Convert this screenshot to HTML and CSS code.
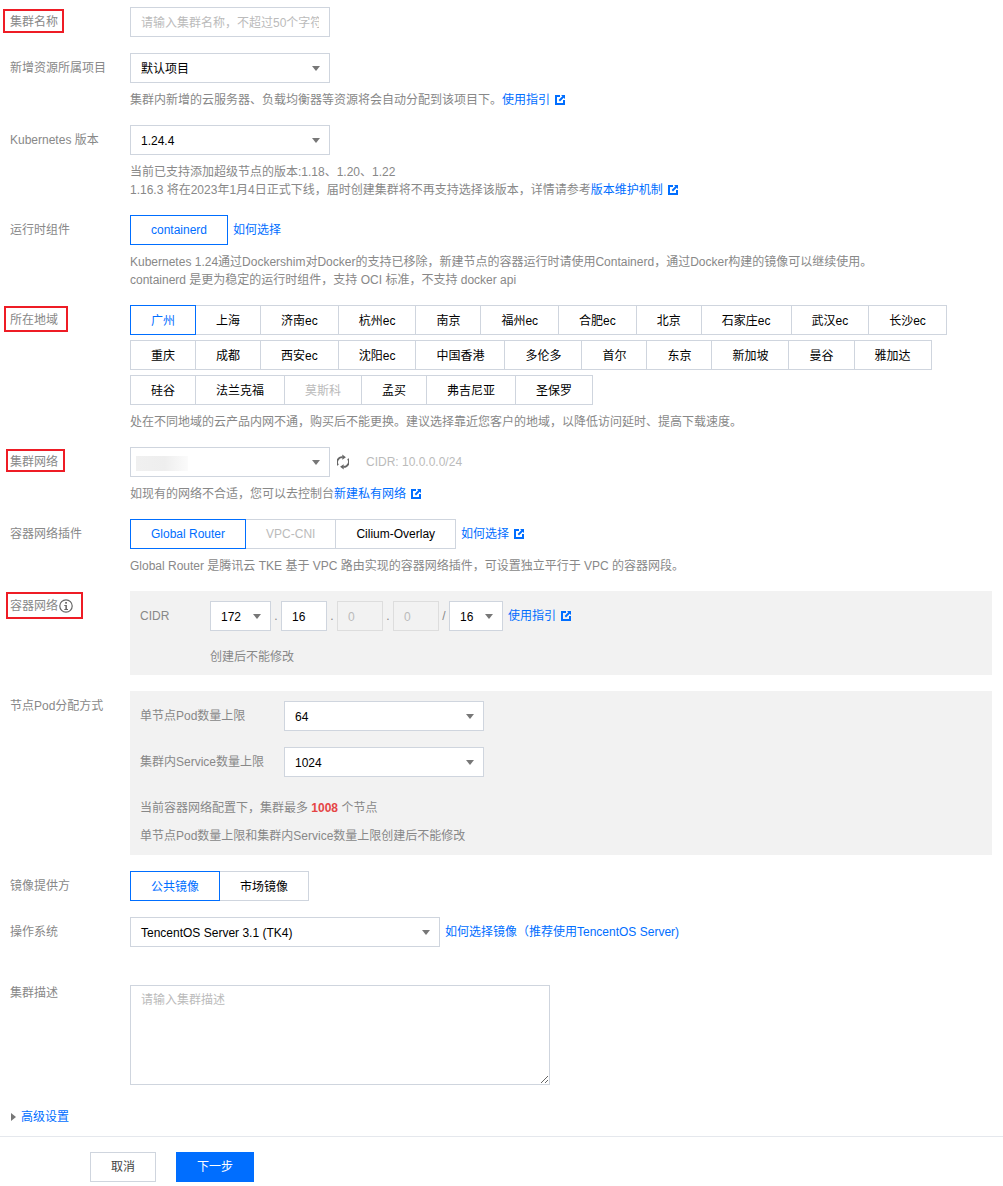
FILE: index.html
```html
<!DOCTYPE html>
<html lang="zh-CN">
<head>
<meta charset="utf-8">
<title>集群信息</title>
<link rel="stylesheet" href="styles.css">
</head>
<body>
<svg class="sprite" width="0" height="0">
  <symbol id="ext" viewBox="0 0 10 10">
    <path d="M0 0H5V2H2V8H8V5H10V10H0Z" fill="#006eff"/>
    <path d="M6 0H10V4L8.7 2.7 5 6.4 3.6 5 7.3 1.3Z" fill="#006eff"/>
  </symbol>
</svg>
<main class="page">
  <form class="form">
    <div class="row">
      <div class="label"><span class="mark mark-name">集群名称</span></div>
      <div class="field"><div class="input w200 placeholder"><span class="clip">请输入集群名称，不超过50个字符</span></div></div>
    </div>

    <div class="row">
      <div class="label">新增资源所属项目</div>
      <div class="field">
        <div class="select w200">默认项目<i class="caret"></i></div>
        <p class="help">集群内新增的云服务器、负载均衡器等资源将会自动分配到该项目下。<a class="link">使用指引</a><svg class="ext"><use href="#ext"/></svg></p>
      </div>
    </div>

    <div class="row">
      <div class="label">Kubernetes 版本</div>
      <div class="field">
        <div class="select w200">1.24.4<i class="caret"></i></div>
        <p class="help">当前已支持添加超级节点的版本:1.18、1.20、1.22<br>1.16.3 将在2023年1月4日正式下线，届时创建集群将不再支持选择该版本，详情请参考<a class="link">版本维护机制</a><svg class="ext"><use href="#ext"/></svg></p>
      </div>
    </div>

    <div class="row">
      <div class="label">运行时组件</div>
      <div class="field">
        <div class="inline">
          <div class="group latin"><span class="btn on">containerd</span></div>
          <a class="link side">如何选择</a>
        </div>
        <p class="help">Kubernetes 1.24通过Dockershim对Docker的支持已移除，新建节点的容器运行时请使用Containerd，通过Docker构建的镜像可以继续使用。<br>containerd 是更为稳定的运行时组件，支持 OCI 标准，不支持 docker api</p>
      </div>
    </div>

    <div class="row">
      <div class="label"><span class="mark mark-region">所在地域</span></div>
      <div class="field">
        <div class="regions">
          <div class="group">
            <span class="btn on">广州</span><span class="btn">上海</span><span class="btn">济南ec</span><span class="btn">杭州ec</span><span class="btn">南京</span><span class="btn">福州ec</span><span class="btn">合肥ec</span><span class="btn">北京</span><span class="btn">石家庄ec</span><span class="btn">武汉ec</span><span class="btn">长沙ec</span>
          </div>
          <div class="group">
            <span class="btn">重庆</span><span class="btn">成都</span><span class="btn">西安ec</span><span class="btn">沈阳ec</span><span class="btn">中国香港</span><span class="btn">多伦多</span><span class="btn">首尔</span><span class="btn">东京</span><span class="btn">新加坡</span><span class="btn">曼谷</span><span class="btn">雅加达</span>
          </div>
          <div class="group">
            <span class="btn">硅谷</span><span class="btn">法兰克福</span><span class="btn off">莫斯科</span><span class="btn">孟买</span><span class="btn">弗吉尼亚</span><span class="btn">圣保罗</span>
          </div>
        </div>
        <p class="help">处在不同地域的云产品内网不通，购买后不能更换。建议选择靠近您客户的地域，以降低访问延时、提高下载速度。</p>
      </div>
    </div>

    <div class="row">
      <div class="label"><span class="mark mark-net">集群网络</span></div>
      <div class="field">
        <div class="inline">
          <div class="select w200"><span class="blur"></span><i class="caret"></i></div>
          <svg class="refresh" viewBox="1 0 12 16" width="12" height="16">
            <path d="M2 11.2A5.2 5.2 0 0 1 6.6 3.1" fill="none" stroke="#666" stroke-width="1.8"/>
            <path d="M6.3 0.6V5.8L9.9 3.2Z" fill="#666"/>
            <path d="M12 4.8A5.2 5.2 0 0 1 7.4 12.9" fill="none" stroke="#666" stroke-width="1.8"/>
            <path d="M7.7 15.4V10.2L4.1 12.8Z" fill="#666"/>
          </svg>
          <span class="cidr-note">CIDR: 10.0.0.0/24</span>
        </div>
        <p class="help">如现有的网络不合适，您可以去控制台<a class="link">新建私有网络</a><svg class="ext"><use href="#ext"/></svg></p>
      </div>
    </div>

    <div class="row">
      <div class="label">容器网络插件</div>
      <div class="field">
        <div class="inline">
          <div class="group latin"><span class="btn on">Global Router</span><span class="btn off">VPC-CNI</span><span class="btn">Cilium-Overlay</span></div>
          <a class="link side">如何选择</a><svg class="ext"><use href="#ext"/></svg>
        </div>
        <p class="help">Global Router 是腾讯云 TKE 基于 VPC 路由实现的容器网络插件，可设置独立平行于 VPC 的容器网段。</p>
      </div>
    </div>

    <div class="row">
      <div class="label"><span class="mark mark-cni">容器网络<svg class="info" viewBox="0 0 14 14" width="14" height="14"><circle cx="7" cy="7" r="6.2" fill="none" stroke="#666" stroke-width="1.2"/><rect x="6.2" y="3" width="1.7" height="1.7" fill="#666"/><path d="M5.3 6H7.9V10H9V11H5.3V10H6.4V7H5.3Z" fill="#666"/></svg></span></div>
      <div class="field">
        <div class="panel">
          <div class="inline">
            <span class="panel-label cidr-label">CIDR</span>
            <div class="select w61">172<i class="caret"></i></div>
            <span class="dot">.</span>
            <div class="input w46 num">16</div>
            <span class="dot">.</span>
            <div class="input w46 num locked">0</div>
            <span class="dot">.</span>
            <div class="input w46 num locked">0</div>
            <span class="slash">/</span>
            <div class="select w54">16<i class="caret"></i></div>
            <a class="link side">使用指引</a><svg class="ext"><use href="#ext"/></svg>
          </div>
          <p class="panel-note cidr-note-line">创建后不能修改</p>
        </div>
      </div>
    </div>

    <div class="row">
      <div class="label">节点Pod分配方式</div>
      <div class="field">
        <div class="panel">
          <div class="inline pod-row">
            <span class="panel-label pod-label">单节点Pod数量上限</span>
            <div class="select w200">64<i class="caret"></i></div>
          </div>
          <div class="inline pod-row">
            <span class="panel-label pod-label">集群内Service数量上限</span>
            <div class="select w200">1024<i class="caret"></i></div>
          </div>
          <p class="panel-note first">当前容器网络配置下，集群最多 <b class="red">1008</b> 个节点</p>
          <p class="panel-note second">单节点Pod数量上限和集群内Service数量上限创建后不能修改</p>
        </div>
      </div>
    </div>

    <div class="row">
      <div class="label">镜像提供方</div>
      <div class="field"><div class="group"><span class="btn on">公共镜像</span><span class="btn">市场镜像</span></div></div>
    </div>

    <div class="row">
      <div class="label">操作系统</div>
      <div class="field">
        <div class="inline">
          <div class="select w310">TencentOS Server 3.1 (TK4)<i class="caret"></i></div>
          <a class="link side">如何选择镜像（推荐使用TencentOS Server)</a>
        </div>
      </div>
    </div>

    <div class="row desc-row">
      <div class="label desc-label">集群描述</div>
      <div class="field"><textarea class="textarea" placeholder="请输入集群描述"></textarea></div>
    </div>

    <div class="advanced"><i class="tri"></i><a class="link">高级设置</a></div>
  </form>

  <footer class="footer">
    <button type="button" class="action cancel">取消</button>
    <button type="button" class="action primary">下一步</button>
  </footer>
</main>
</body>
</html>
```

FILE: styles.css
```css
* { box-sizing: border-box; }
html, body { margin: 0; padding: 0; background: #fff; }
body {
  font-family: "Liberation Sans", "Noto Sans CJK SC", sans-serif;
  font-size: 12px;
  line-height: 18px;
  color: #000;
  overflow: hidden;
}
.sprite { position: absolute; }
.page { height: 1186px; }
.form { padding: 7px 0 0 10px; height: 1136px; }
.row { display: flex; margin-bottom: 16px; }
.label { width: 120px; flex: none; line-height: 30px; color: #888; position: relative; }
.desc-label { line-height: 16px; }
.field { flex: 1; min-width: 0; }
.inline { display: flex; align-items: center; }
.w200 { width: 200px; }
.w310 { width: 310px; }
.w61 { width: 61px; }
.w54 { width: 54px; }
.w46 { width: 46px; }

.input, .select {
  height: 30px;
  line-height: 30px;
  border: 1px solid #cfd5de;
  background: #fff;
  padding: 0 10px;
  flex: none;
  position: relative;
  white-space: nowrap;
}
.placeholder { color: #bbb; }
.clip { display: block; overflow: hidden; height: 28px; }
.num { padding: 0 10px; }
.locked { background: #f2f2f2; border-color: #ddd; color: #bbb; }
.caret {
  position: absolute;
  right: 9px;
  top: 12px;
  border-left: 4px solid transparent;
  border-right: 4px solid transparent;
  border-top: 5px solid #777;
  width: 0;
  height: 0;
}
.help { margin: 8px 0 0; color: #888; white-space: nowrap; }
.link { color: #006eff; }
.side { margin-left: 5px; }
.ext { width: 10px; height: 10px; margin-left: 5px; vertical-align: -1px; flex: none; }

.group { display: flex; }
.btn {
  height: 30px;
  line-height: 30px;
  padding: 0 20px;
  border: 1px solid #cfd5de;
  margin-left: -1px;
  background: #fff;
  white-space: nowrap;
  position: relative;
}
.latin .btn { line-height: 28px; }
.btn:first-child { margin-left: 0; }
.btn.on { border-color: #006eff; color: #006eff; z-index: 1; }
.btn.off { color: #bbb; }
.regions { display: flex; flex-direction: column; gap: 5px; }

.blur {
  position: absolute;
  left: 5px;
  top: 8px;
  width: 52px;
  height: 15px;
  background: linear-gradient(90deg, #f0f0f0 0%, #eeeeee 55%, #fbfbfb 100%);
}
.refresh { margin-left: 7px; flex: none; }
.cidr-note { margin-left: 17px; color: #bbb; }

.panel { width: 862px; background: #f2f2f2; padding: 10px; }
.panel-label { color: #888; flex: none; }
.cidr-label { width: 70px; }
.pod-label { width: 144px; }
.pod-row + .pod-row { margin-top: 16px; }
.dot { width: 10px; text-align: center; color: #888; flex: none; }
.slash { width: 10px; text-align: center; color: #888; flex: none; }
.panel-note { margin: 0; color: #888; }
.cidr-note-line { margin: 16px 0 0 70px; padding-top: 1px; height: 18px; line-height: 18px; }
.panel-note.first { margin-top: 22px; }
.panel-note.second { margin-top: 10px; }
.red { color: #e54545; }

.desc-row { margin-top: 38px; }
.textarea {
  display: block;
  width: 420px;
  height: 100px;
  border: 1px solid #cfd5de;
  padding: 5px 10px;
  font: inherit;
  resize: both;
  outline: none;
  background: #fff;
}
.textarea::placeholder { color: #bbb; opacity: 1; }

.advanced { display: flex; align-items: center; margin-top: 23px; height: 18px; margin-left: 1px; }
.tri {
  width: 0;
  height: 0;
  border-top: 4px solid transparent;
  border-bottom: 4px solid transparent;
  border-left: 5px solid #777;
  margin-right: 5px;
}

.footer {
  border-top: 1px solid #e5e8ed;
  padding: 15px 0 0 90px;
  display: flex;
  gap: 20px;
}
.action {
  height: 30px;
  font: inherit;
  line-height: 28px;
  padding: 0;
  border: 1px solid #cfd5de;
  background: #fff;
  color: #444;
}
.cancel { width: 66px; }
.primary { width: 78px; background: #006eff; border-color: #006eff; color: #fff; }

.mark { position: relative; display: inline-block; }
.mark::before {
  content: "";
  position: absolute;
  border: 2px solid #ee1c25;
  pointer-events: none;
}
.mark-name::before { left: -7px; right: -6px; top: 2px; bottom: 4px; }
.mark-region::before { left: -6px; right: -10px; top: 1px; bottom: 3px; }
.mark-net::before { left: -4px; right: -7px; top: 2px; bottom: 5px; }
.mark-cni::before { left: -4px; right: -10px; top: 1px; bottom: 2px; }
.info { margin-left: 1px; vertical-align: -3px; }
```
